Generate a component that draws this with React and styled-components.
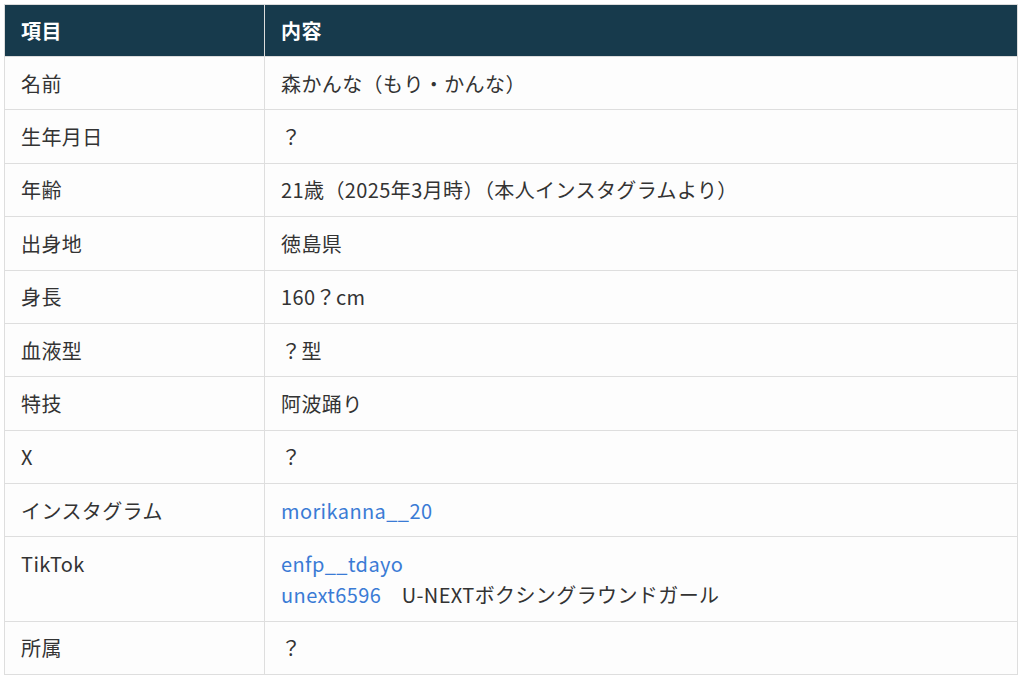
import React from "react";
import styled, { createGlobalStyle } from "styled-components";

const Global = createGlobalStyle`
  html, body { margin: 0; padding: 0; background: #ffffff; }
  body { font-family: "Noto Sans CJK JP", "Noto Sans", sans-serif; }
`;

const Wrap = styled.div`
  padding: 4px 6px 0 4px;
`;

const Table = styled.table`
  width: 1014px;
  border-collapse: collapse;
  table-layout: fixed;
  font-size: 20px;
  letter-spacing: 0.02em;
  color: #333333;
`;

const HeadCell = styled.th`
  box-sizing: border-box;
  background: #173a4c;
  color: #ffffff;
  font-weight: 700;
  text-align: left;
  padding: 10px 16px;
  line-height: 31px;
  border: 1px solid #dcdcdc;
  width: ${(p) => p.$w || "auto"};
`;

const Cell = styled.td`
  background: #fdfdfd;
  padding: 10.7px 16px;
  line-height: 31px;
  border: 1px solid #dedede;
  vertical-align: top;
`;

const Link = styled.a`
  color: #3a7bd5;
  text-decoration: none;
`;

const Line = styled.div``;

const rows = [
  ["名前", "森かんな（もり・かんな）"],
  ["生年月日", "？"],
  ["年齢", "21歳（2025年3月時）（本人インスタグラムより）"],
  ["出身地", "徳島県"],
  ["身長", "160？cm"],
  ["血液型", "？型"],
  ["特技", "阿波踊り"],
  ["X", "？"],
  ["インスタグラム", <Link href="#">morikanna__20</Link>],
  [
    "TikTok",
    <>
      <Line>
        <Link href="#">enfp__tdayo</Link>
      </Line>
      <Line>
        <Link href="#">unext6596</Link>
        {"\u3000U-NEXTボクシングラウンドガール"}
      </Line>
    </>,
  ],
  ["所属", "？"],
];

export default function App() {
  return (
    <>
      <Global />
      <Wrap>
        <Table>
          <thead>
            <tr>
              <HeadCell $w="260px">項目</HeadCell>
              <HeadCell>内容</HeadCell>
            </tr>
          </thead>
          <tbody>
            {rows.map(([k, v], i) => (
              <tr key={i}>
                <Cell>{k}</Cell>
                <Cell>{v}</Cell>
              </tr>
            ))}
          </tbody>
        </Table>
      </Wrap>
    </>
  );
}
